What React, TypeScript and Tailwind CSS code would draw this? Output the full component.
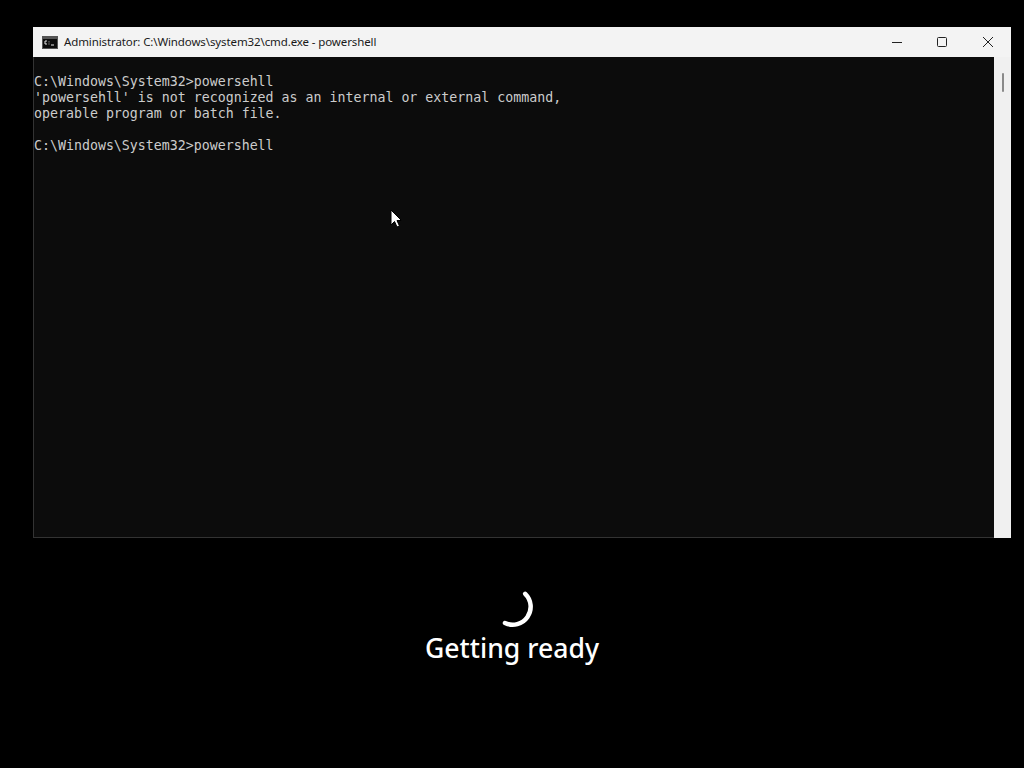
export default function App() {
  const lines = [
    "",
    "C:\\Windows\\System32>powersehll",
    "'powersehll' is not recognized as an internal or external command,",
    "operable program or batch file.",
    "",
    "C:\\Windows\\System32>powershell",
  ];
  return (
    <div className="relative flex h-[768px] w-[1024px] flex-col overflow-hidden bg-black pt-[27px]">
      <div className="ml-[33px] flex h-[511px] w-[978px] flex-col bg-[#f3f3f3]">
        <div className="flex h-[30px] shrink-0 items-center bg-[#f3f3f3] pl-[9px] font-['Noto_Sans','Open_Sans',sans-serif] text-[11.5px] tracking-[-0.11px] text-[#1a1a1a]">
          <svg width="16" height="13" viewBox="0 0 16 13" className="mr-[6px] shrink-0">
            <rect x="0" y="0" width="16" height="13" fill="#555555" />
            <rect x="1" y="3" width="14" height="9" fill="#0c0c0c" />
            <path d="M5 5H3v3h2M7 5.5v.8M7 7.6v.8M9 9h3" stroke="#e8e8e8" strokeWidth="1" fill="none" />
          </svg>
          <span>Administrator: C:\Windows\system32\cmd.exe - powershell</span>
          <div className="ml-auto flex items-center pr-[17px]">
            <svg width="12" height="12" viewBox="0 0 12 12" className="mr-[33px]">
              <path d="M0 6.5h10" stroke="#222" strokeWidth="1" />
            </svg>
            <svg width="12" height="12" viewBox="0 0 12 12" className="mr-[33px]">
              <rect x="0.5" y="1.5" width="9" height="9" rx="1" fill="none" stroke="#222" strokeWidth="1" />
            </svg>
            <svg width="12" height="12" viewBox="0 0 12 12">
              <path d="M1 1l10 10M11 1L1 11" stroke="#222" strokeWidth="1" />
            </svg>
          </div>
        </div>
        <div className="flex min-h-0 flex-1">
          <div className="flex-1 border-b border-l border-[#333333] bg-[#0c0c0c] pt-px">
            <pre className="font-['DejaVu_Sans_Mono',monospace] text-[13.28px] leading-[16px] text-[#cccccc]">
              {lines.join("\n")}
            </pre>
          </div>
          <div className="flex w-[17px] shrink-0 justify-center bg-[#f0f0f0] pt-[16px]">
            <div className="h-[19px] w-[2px] rounded-full bg-[#8a8a8a]" />
          </div>
        </div>
      </div>
      <div className="flex flex-1 flex-col items-center pt-[47px]">
        <svg width="44" height="44" viewBox="0 0 44 44" className="ml-[2px]">
          <path d="M34.2 8.8 A18 18 0 0 1 14 38" fill="none" stroke="#ffffff" strokeWidth="4.5" strokeLinecap="round" />
        </svg>
        <div className="mt-px font-['Noto_Sans','Open_Sans',sans-serif] text-[26.6px] leading-[36px] font-medium text-white">
          Getting ready
        </div>
      </div>
      <svg width="12" height="19" viewBox="0 0 12 19" className="absolute left-[390px] top-[209px]">
        <path d="M1 1v15l3.5-3.5 2.5 5.5 2.5-1-2.5-5.5h4.5z" fill="#ffffff" stroke="#000000" strokeWidth="1" />
      </svg>
    </div>
  );
}
